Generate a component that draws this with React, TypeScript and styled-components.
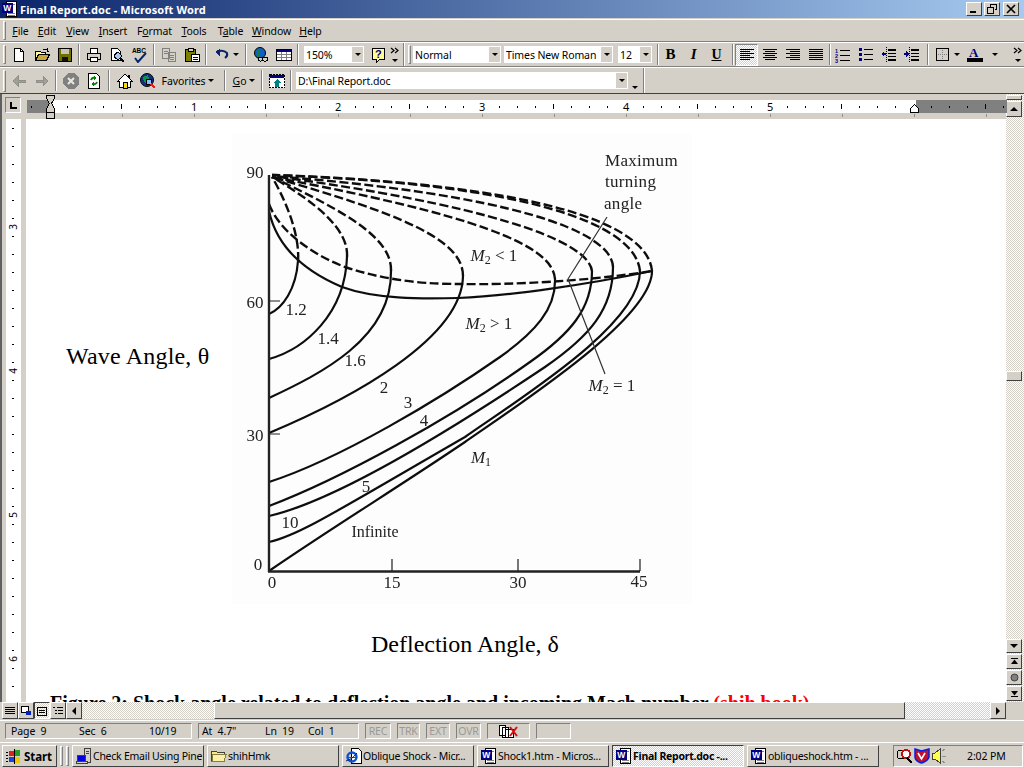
import React from "react";
import styled, { createGlobalStyle } from "styled-components";

const Global = createGlobalStyle`
  html, body { margin: 0; padding: 0; background: #d4d0c8; overflow: hidden; }
  #root { width: 1024px; height: 768px; }
  svg { display: block; flex: none; }
`;

const UI = `"Noto Sans", "DejaVu Sans", sans-serif`;
const DITHER = `repeating-conic-gradient(#fff 0 25%, #d4d0c8 0 50%) 0 0 / 2px 2px`;

const Page = styled.div`
  width: 1024px; height: 768px; display: flex; flex-direction: column;
  background: #d4d0c8; font: 10.5px ${UI}; letter-spacing: -.1px; color: #000; overflow: hidden;
`;
const TitleBar = styled.div`
  height: 18px; flex: none; display: flex; align-items: center; padding: 0 2px;
  gap: 2px; background: linear-gradient(90deg, #0a246a, #a6caf0);
  color: #fff; font: bold 11px ${UI}; letter-spacing: .1px;
`;
const TitleText = styled.span` flex: 1; `;
const WinBtn = styled.div`
  width: 16px; height: 14px; margin-left: ${p => p.$gap || 0}px; display: flex; align-items: center; justify-content: center;
  background: #d4d0c8; border: 1px solid; border-color: #fff #404040 #404040 #fff; box-sizing: border-box;
`;
const TitleSpacer = styled.div` width: 1px; `;
const MenuBar = styled.div`
  height: 23px; flex: none; display: flex; align-items: center; box-sizing: border-box;
  margin-top: 1px; border-top: 1px solid #fff; border-bottom: 1px solid #808080; padding-left: 3px;
`;
const Grip = styled.div`
  width: 1px; height: ${p => p.$h || 17}px; flex: none; background: #d4d0c8;
  border: 1px solid; border-color: #fff #808080 #808080 #fff; margin-right: ${p => p.$mr || 0}px;
`;
const MenuItem = styled.span`
  width: ${p => p.$w}px; flex: none; text-align: center;
`;
const Row = styled.div`
  height: ${p => p.$h}px; flex: none; display: flex; align-items: center; box-sizing: border-box;
  border-top: 1px solid #fff; border-bottom: 1px solid ${p => p.$dark ? "#404040" : "#808080"}; padding-left: 3px;
`;
const Btn = styled.div`
  width: ${p => p.$w || 23}px; height: 22px; flex: none; display: flex; align-items: center; justify-content: center; gap: ${p => p.$gap ?? 3}px;
  box-sizing: border-box;
  ${p => p.$on && `background: ${DITHER}; border: 1px solid; border-color: #808080 #fff #fff #808080;`}
`;
const Sep = styled.div`
  width: 1px; height: 21px; flex: none; background: #808080; border-right: 1px solid #fff;
  margin: 0 ${p => p.$r ?? 2}px 0 ${p => p.$l ?? 2}px;
`;
const Gap = styled.div` width: ${p => p.$w}px; flex: none; `;
const Divider = styled.div`
  width: 1px; align-self: stretch; flex: none; background: #808080; border-right: 1px solid #fff; margin: 0 3px 0 3px;
`;
const Combo = styled.div`
  width: ${p => p.$w}px; height: 17px; flex: none; background: #fff; display: flex; align-items: center;
  justify-content: space-between; margin-right: ${p => p.$mr || 0}px; margin-left: ${p => p.$ml || 0}px;
  padding-left: 2px; box-sizing: border-box; white-space: nowrap;
`;
const ComboArrow = styled.div`
  width: 11px; height: 15px; margin-right: 1px; background: #d4d0c8; display: flex; align-items: center; justify-content: center;
`;
const Tri = styled.i`
  display: block; width: 0; height: 0; border-left: 3px solid transparent; border-right: 3px solid transparent;
  border-top: 3px solid #000;
`;
const Label = styled.span` color: #000; `;
const LetterB = styled.span`font: bold 15px "Liberation Serif", serif;`;
const LetterI = styled.span`font: italic bold 15px "Liberation Serif", serif;`;
const LetterU = styled.span`font: bold 14px "Liberation Serif", serif; text-decoration: underline;`;

const Work = styled.div` height: 608px; flex: none; display: flex; border-left: 2px solid #606060; `;
const WorkLeft = styled.div` width: 1004px; display: flex; flex-direction: column; flex: none; `;
const RulerRow = styled.div` height: 25px; flex: none; display: flex; position: relative; `;
const TabBox = styled.div`
  width: 16px; height: 16px; margin: 3px 4px 0 3px; flex: none; box-sizing: border-box; border: 1px solid;
  border-color: #808080 #fff #fff #808080; display: flex; align-items: center; justify-content: center;
`;
const DocRow = styled.div` flex: 1; display: flex; min-height: 0; `;
const VRuler = styled.div` width: 24px; flex: none; padding-left: 4px; box-sizing: border-box; `;
const Doc = styled.div`
  flex: 1; background: #fff; overflow: hidden; position: relative; font-family: "Liberation Serif", serif; color: #000; letter-spacing: 0;
`;
const ChartRow = styled.div` display: flex; padding: 15px 0 0 40px; height: 470px; box-sizing: content-box; `;
const WaveLabel = styled.div`
  width: 166px; flex: none; font-size: 24px; padding-top: 207px; line-height: 30px; white-space: nowrap; letter-spacing: .2px;
`;
const Deflection = styled.div`
  font-size: 24px; line-height: 30px; margin: 25px 0 0 345px; white-space: nowrap;
`;
const Caption = styled.div`
  font: bold 20px "Liberation Serif", serif; margin: 33px 0 0 24px; white-space: nowrap;
`;
const Red = styled.span` color: #f00; `;

const VScroll = styled.div`
  width: 18px; flex: none; display: flex; flex-direction: column; background: ${DITHER}; padding-top: 1px;
`;
const SBtn = styled.div`
  height: ${p => p.$h || 15}px; width: ${p => p.$w || 16}px; flex: none; background: #d4d0c8; box-sizing: border-box;
  border: 1px solid; border-color: #fff #404040 #404040 #fff; display: flex; align-items: center; justify-content: center;
  margin-bottom: ${p => p.$mb || 0}px;
`;
const STrack = styled.div` height: ${p => p.$h}px; flex: none; `;
const TriUp = styled.i` border-left: 4px solid transparent; border-right: 4px solid transparent; border-bottom: 4px solid #000; `;
const TriDown = styled.i` border-left: 4px solid transparent; border-right: 4px solid transparent; border-top: 4px solid #000; `;
const TriLeft = styled.i` border-top: 4px solid transparent; border-bottom: 4px solid transparent; border-right: 4px solid #000; `;
const TriRight = styled.i` border-top: 4px solid transparent; border-bottom: 4px solid transparent; border-left: 4px solid #000; `;

const HScroll = styled.div` height: 17px; flex: none; display: flex; align-items: stretch; padding-left: 2px; `;
const Dither = styled.div` width: ${p => p.$w}px; flex: none; background: ${DITHER}; `;
const Thumb = styled.div`
  width: ${p => p.$w}px; flex: none; background: #d4d0c8; box-sizing: border-box; border: 1px solid; border-color: #fff #404040 #404040 #fff;
`;
const ViewBtn = styled.div`
  width: 16px; flex: none; box-sizing: border-box; display: flex; align-items: center; justify-content: center;
  border: 1px solid; border-color: ${p => p.$on ? "#404040 #fff #fff #404040" : "#fff #404040 #404040 #fff"};
  background: ${p => p.$on ? DITHER : "#d4d0c8"};
`;

const Status = styled.div`
  height: 21px; flex: none; display: flex; align-items: center; padding-left: 5px; gap: 6px; border-top: 1px solid #fff; box-sizing: border-box; margin-top: 1px;
`;
const Cell = styled.div`
  width: ${p => p.$w}px; height: 16px; flex: none; box-sizing: border-box; border: 1px solid; border-color: #808080 #fff #fff #808080;
  display: flex; align-items: center; color: ${p => p.$off ? "#9a9a94" : "#000"};
  padding-left: ${p => p.$pad ?? 0}px; justify-content: ${p => p.$center ? "center" : "flex-start"}; white-space: pre;
`;
const CellPart = styled.span` width: ${p => p.$w}px; flex: none; `;

const Taskbar = styled.div`
  height: 27px; flex: none; display: flex; align-items: center; padding-left: 2px; box-sizing: border-box;
  border-top: 1px solid #fff; margin-top: 1px;
`;
const StartBtn = styled.div`
  width: 55px; height: 22px; flex: none; display: flex; align-items: center; gap: 2px; padding-left: 3px; box-sizing: border-box;
  border: 1px solid; border-color: #fff #404040 #404040 #fff; font: bold 11.5px ${UI};
`;
const Task = styled.div`
  width: 132px; height: 22px; flex: none; margin-right: 3px; display: flex; align-items: center; gap: 1px; padding-left: 3px; box-sizing: border-box;
  border: 1px solid; border-color: ${p => p.$on ? "#404040 #fff #fff #404040" : "#fff #404040 #404040 #fff"};
  background: ${p => p.$on ? DITHER : "#d4d0c8"}; font-weight: ${p => p.$on ? "bold" : "normal"};
  white-space: nowrap; overflow: hidden; letter-spacing: -.25px;
`;
const Tray = styled.div`
  width: 130px; height: 22px; flex: none; margin-left: 11px; display: flex; align-items: center; gap: 1px; padding-left: 3px; box-sizing: border-box;
  border: 1px solid; border-color: #808080 #fff #fff #808080;
`;
const Clock = styled.span` margin-left: 19px; `;

/* ---------- icons ---------- */
const I: React.FC<{ s?: number; children: React.ReactNode }> = ({ s = 16, children }) => (
  <svg width={s} height={s} viewBox="0 0 16 16" shapeRendering="crispEdges">{children}</svg>
);
const NewIco = () => <I><path d="M3.500 1.500h6l3 3v10h-9z" fill="#fff" stroke="#000" /><path d="M9.500 1.500v3h3" fill="none" stroke="#000" /></I>;
const OpenIco = () => <I><path d="M1.500 13.500v-9h5l1 1h4v2" fill="#ffff99" stroke="#000" /><path d="M1.500 13.500l3-6h11l-3 6z" fill="#c8a83c" stroke="#000" /><path d="M9 3q2-2 4 0M13 1v3h2" fill="none" stroke="#000" /></I>;
const SaveIco = () => <I><rect x="1.500" y="1.500" width="13" height="13" fill="#707000" stroke="#000" /><rect x="4" y="2" width="8" height="5" fill="#c8c4b8" /><rect x="5" y="10" width="6" height="4" fill="#111" /></I>;
const PrintIco = () => <I><path d="M4.500 1.500h7v5h-7z" fill="#fff" stroke="#000" /><path d="M1.500 6.500h13v6h-13z" fill="#d4d0c8" stroke="#000" /><path d="M4.500 10.500h7v4h-7z" fill="#fff" stroke="#000" /><rect x="11" y="8" width="2" height="1" fill="#ff0" /></I>;
const PreviewIco = () => <I><path d="M2.500 1.500h6l3 3v9h-9z" fill="#fff" stroke="#000" /><circle cx="9" cy="9" r="3.200" fill="#a6caf0" stroke="#000" /><path d="M11 11l4 4" stroke="#000" strokeWidth="2" /></I>;
const SpellIco = () => <I><text x="0" y="6" fontSize="6.500" fontWeight="bold" fontFamily="Liberation Sans">ABC</text><path d="M3 11l3 4 8-9" fill="none" stroke="#0a246a" strokeWidth="2" shapeRendering="auto" /></I>;
const CopyIco = () => <I><path d="M1.500 1.500h7v10h-7zM7.500 5.500h7v9h-7z" fill="#d4d0c8" stroke="#808080" /><path d="M3 4h4M3 6h4M9 8h4M9 10h4M9 12h4" stroke="#808080" /></I>;
const PasteIco = () => <I><rect x="1.500" y="2.500" width="10" height="12" fill="#808000" stroke="#000" /><rect x="4" y="1" width="5" height="3" fill="#d4d0c8" stroke="#000" /><rect x="7.500" y="7.500" width="8" height="7" fill="#fff" stroke="#000" /><path d="M9 10h5M9 12h5" stroke="#000080" /></I>;
const UndoIco = () => <I><path d="M3 5q6-3 10 1 1 3-2 5" fill="none" stroke="#0a246a" strokeWidth="2" shapeRendering="auto" /><path d="M1 5l5-3v7z" fill="#0a246a" /></I>;
const WebIco = () => <I><circle cx="7" cy="6" r="5.500" fill="#1060c0" stroke="#000" shapeRendering="auto" /><path d="M4 2l4 2-2 4 2 3-4-1z" fill="#108040" /><rect x="5" y="10" width="5" height="4" rx="2" fill="#d4d0c8" stroke="#000" /><rect x="9" y="10" width="6" height="4" rx="2" fill="#d4d0c8" stroke="#000" /></I>;
const TableIco = () => <I><rect x="0.500" y="2.500" width="15" height="11" fill="#fff" stroke="#000" /><rect x="1" y="3" width="14" height="2" fill="#000080" /><path d="M5.500 5v8M10.500 5v8M1 7.500h14M1 10.500h14" stroke="#808080" /></I>;
const HelpIco = () => <I><path d="M1.500 1.500h12v11h-5l-3 3v-3h-4z" fill="#ffff99" stroke="#000" /><text x="4" y="11" fontSize="11" fontWeight="bold" fill="#000080" fontFamily="Liberation Sans">?</text></I>;
const Chevrons = () => (
  <svg width="10" height="20" viewBox="0 0 10 20"><path d="M1 3l3 2.500-3 2.500M5 3l3 2.500-3 2.500" fill="none" stroke="#000" strokeWidth="1.200" /><path d="M2 14h6l-3 3z" fill="#000" /></svg>
);
const AlignIco: React.FC<{ a: number[]; off?: number[] }> = ({ a, off }) => (
  <I>{a.map((w, i) => <rect key={i} x={off ? off[i] : 1} y={2 + i * 2} width={w} height="1" fill="#000" />)}</I>
);
const NumIco = () => <I><text x="0" y="6" fontSize="5.500" fontWeight="bold" fill="#000080" fontFamily="Liberation Sans">1</text><text x="0" y="11" fontSize="5.500" fontWeight="bold" fill="#000080" fontFamily="Liberation Sans">2</text><text x="0" y="16" fontSize="5.500" fontWeight="bold" fill="#000080" fontFamily="Liberation Sans">3</text><path d="M5 3h10M5 8h10M5 13h10" stroke="#000" /></I>;
const BulletIco = () => <I><path d="M1 1h3v3H1zM1 6h3v3H1zM1 11h3v3H1z" fill="#000080" /><path d="M6 2.500h9M6 7.500h9M6 12.500h9" stroke="#000" /></I>;
const OutdentIco = () => <I><path d="M7 2h8v2H7zM7 6h8v1H7zM7 9h8v1H7zM7 12h8v2H7z" fill="#000" /><path d="M5 0v16" stroke="#000" strokeDasharray="1 1" /><path d="M0 7l3-3v2h2v2H3v2z" fill="#000080" /></I>;
const IndentIco = () => <I><path d="M7 2h8v2H7zM7 6h8v1H7zM7 9h8v1H7zM7 12h8v2H7z" fill="#000" /><path d="M5 0v16" stroke="#000" strokeDasharray="1 1" /><path d="M5 7L2 4v2H0v2h2v2z" fill="#000080" /></I>;
const BorderIco = () => <I><rect x="1.500" y="1.500" width="12" height="12" fill="none" stroke="#000" /><path d="M7.500 3v10M3 7.500h10" stroke="#808080" strokeDasharray="1 1" /></I>;
const ColorIco = () => <I><text x="2" y="10" fontSize="13" fontWeight="bold" fill="#000080" fontFamily="Liberation Serif">A</text><rect x="0" y="11" width="16" height="4" fill="#000" /></I>;
const ArrowIco: React.FC<{ flip?: boolean }> = ({ flip }) => <I><path d={flip ? "M2 7h7V3l5 5-5 5V9H2z" : "M14 7H7V3L2 8l5 5V9h7z"} fill="#a0a09a" stroke="#909088" /></I>;
const StopIco = () => <I><path d="M5 0h6l5 5v6l-5 5H5l-5-5V5z" fill="#808080" /><path d="M5 5l6 6M11 5l-6 6" stroke="#e8e8e0" strokeWidth="2" shapeRendering="auto" /></I>;
const RefreshIco = () => <I><path d="M2.500 0.500h8l3 3v12h-11z" fill="#fff" stroke="#000" /><path d="M5 7q1-3 4-2M11 9q-1 3-4 2" fill="none" stroke="#008000" strokeWidth="2" shapeRendering="auto" /><path d="M8 3l3 2-3 2zM8 13l-3-2 3-2z" fill="#008000" /></I>;
const HomeIco = () => <I><path d="M8 1L0.500 8.500h2v6h11v-6h2z" fill="#fff" stroke="#000" /><rect x="6" y="9" width="4" height="6" fill="#ffd800" stroke="#000" /><rect x="11" y="2" width="2" height="3" fill="#000" /></I>;
const SearchIco = () => <I><circle cx="7" cy="7" r="6.500" fill="#103080" stroke="#000" shapeRendering="auto" /><path d="M3 4l5-2 1 4-3 2 1 3-3-2z" fill="#109050" /><circle cx="9" cy="9" r="3" fill="#80c0ff" stroke="#000" /><path d="M11 11l4 4" stroke="#e02020" strokeWidth="2" /></I>;
const StartPageIco = () => <I><rect x="0.500" y="1.500" width="15" height="13" fill="#fff" stroke="#000" strokeDasharray="2 1" /><rect x="1" y="2" width="14" height="3" fill="#000080" /><path d="M8 6l4 4h-2v4H6v-4H4z" fill="#008080" /></I>;
const WordIco: React.FC = () => <I><rect x="4.500" y="0.500" width="10" height="15" fill="#fff" stroke="#000" /><path d="M6 3h7M6 12h7M6 14h7" stroke="#808080" /><rect x="0.500" y="2.500" width="10" height="9" fill="#000080" stroke="#000080" /><text x="1.300" y="10" fontSize="8.500" fontWeight="bold" fill="#fff" fontFamily="Liberation Sans">W</text></I>;
const PcIco = () => <I><rect x="8.500" y="0.500" width="6" height="14" fill="#d4d0c8" stroke="#404040" /><path d="M10 3h3M10 5h3" stroke="#404040" /><rect x="1.500" y="7.500" width="8" height="6" fill="#0000e0" stroke="#404040" /><rect x="0.500" y="13.500" width="11" height="2" fill="#d4d0c8" stroke="#404040" /></I>;
const FolderIco = () => <I><path d="M0.500 3.500h5l1 1h7v9h-13z" fill="#ffe680" stroke="#404040" /><path d="M2 6.500h13l-2 7H1z" fill="#fff0a8" stroke="#808040" /></I>;
const IeIco = () => <I><path d="M5.500 0.500h7l3 3v12h-10z" fill="#fff" stroke="#000" /><circle cx="6" cy="9" r="4.500" fill="none" stroke="#1050d0" strokeWidth="2.400" shapeRendering="auto" /><path d="M2 9h8" stroke="#1050d0" /><path d="M0 13q6-1 11-8" fill="none" stroke="#0a246a" shapeRendering="auto" /></I>;
const FlagIco = () => <I><path d="M3 3h5v5H3z" fill="#e02020" /><path d="M9 2h5v6H9z" fill="#20a020" /><path d="M3 9h5v5H3z" fill="#2040e0" /><path d="M9 9h5v6H9z" fill="#f0c800" /><path d="M0 4h2M0 7h2M0 10h2M0 13h2M8.500 1v15" stroke="#000" /></I>;
const BookIco = () => (
  <svg width="22" height="15" viewBox="0 0 22 15"><path d="M1.500 1.500h6v10h-6zM4.500 3.500h6v10h-6zM7.500 5.500h8v8h-8z" fill="#fff" stroke="#000" shapeRendering="crispEdges" /><path d="M12 3l7 9M19 3l-7 9" stroke="#d01010" strokeWidth="2" /></svg>
);
const MagIco = () => <I><rect x="0.500" y="2.500" width="9" height="8" rx="2" fill="#d4d0c8" stroke="#000" /><circle cx="9" cy="6" r="4" fill="#fff" stroke="#c01010" strokeWidth="2" /><path d="M10 10l5 5" stroke="#000" strokeWidth="2" /></I>;
const ShieldIco = () => <I><path d="M1 1l6.500 2L15 1v8q-1 4-7.500 6Q1 13 1 9z" fill="#c01030" stroke="#0020e0" strokeWidth="1.500" shapeRendering="auto" /><path d="M4 5l3.500 6L11 5" fill="none" stroke="#fff" strokeWidth="1.600" shapeRendering="auto" /></I>;
const SpeakerIco = () => <I><path d="M1 5h3l5-4v14l-5-4H1z" fill="#ffff50" stroke="#404040" /><path d="M11 3l3-2M11 8h4M11 13l3 2" stroke="#909088" /></I>;
const ViewIco: React.FC<{ k: number }> = ({ k }) => (
  <svg width="12" height="12" viewBox="0 0 12 12" shapeRendering="crispEdges">
    {k === 0 && <path d="M1 2.500h10M1 4.500h10M1 6.500h10M1 8.500h10" stroke="#000" />}
    {k === 1 && <><rect x="1.500" y="1.500" width="7" height="6" fill="#fff" stroke="#000" /><rect x="6" y="6" width="5" height="4" fill="#0020c0" /></>}
    {k === 2 && <><rect x="1.500" y="2.500" width="9" height="8" fill="none" stroke="#000" /><path d="M3 5h6M3 7h6" stroke="#000" /></>}
    {k === 3 && <path d="M1 2.500h2M5 2.500h6M3 5.500h2M6 5.500h5M3 8.500h2M6 8.500h5" stroke="#000" />}
  </svg>
);

/* ---------- ruler drawings ---------- */
const HRuler = () => {
  const ticks: React.ReactNode[] = [];
  for (let x = -18; x < 960; x += 18) {
    const inch = x % 144 === 0;
    const half = x % 72 === 0 && !inch;
    if (inch && x > 0) continue;
    if (half) ticks.push(<rect key={x} x={48 + x} y={105} width="1" height="5" fill="#000" />);
    else if (!inch) ticks.push(<rect key={x} x={48 + x} y={107} width="1" height="2" fill="#000" />);
  }
  const under = [];
  for (let x = 72; x < 950; x += 72) under.push(<rect key={x} x={49 + x} y={115} width="1" height="3" fill="#909088" />);
  return (
    <svg width="982" height="25" viewBox="24 95 982 25" shapeRendering="crispEdges">
      <rect x="26" y="101" width="980" height="13" fill="#fff" />
      <rect x="26" y="101" width="22" height="13" fill="#808080" />
      <rect x="915" y="101" width="91" height="13" fill="#808080" />
      {ticks}
      {under}
      {[1, 2, 3, 4, 5].map(n => (
        <text key={n} x={49 + n * 144} y="112" textAnchor="middle" fontSize="11" fontFamily="Noto Sans">{n}</text>
      ))}
      <path d="M45.500 96.500h8v3l-3 5 3 5v4h-8v-4l3-5-3-5z" fill="#d4d0c8" stroke="#000" />
      <path d="M45.500 113.500h8v6h-8z" fill="#d4d0c8" stroke="#000" />
      <path d="M909.500 113.500v-4l4-4 4 4v4z" fill="#fff" stroke="#000" />
    </svg>
  );
};
const VRulerDraw = () => {
  const t: React.ReactNode[] = [];
  for (let y = 9; y < 583; y += 18) {
    const major = (y - 9 - 45 + 144 * 4) % 72 === 0;
    t.push(<rect key={y} x={major ? 11 : 12} y={y} width={major ? 5 : 2} height="1" fill="#000" />);
  }
  const nums: [number, number][] = [[3, 108], [4, 252], [5, 396], [6, 540]];
  return (
    <svg width="15" height="583" viewBox="6 0 15 583" shapeRendering="crispEdges">
      <rect x="6" y="0" width="15" height="583" fill="#fff" />
      {t}
      {nums.map(([n, y]) => (
        <text key={n} x="13" y={y} transform={`rotate(-90 13 ${y})`} textAnchor="middle" dominantBaseline="central" fontSize="10" fontFamily="Noto Sans">{n}</text>
      ))}
    </svg>
  );
};

/* ---------- chart ---------- */
const SOLID = [
  "M269 315C283 309 296 290 298 262",
  "M269 360C305 350 345 315 347 258",
  "M269 399C320 375 392 340 391 272",
  "M269 434C350 400 462 340 463 277",
  "M269 483C340 460 440 400 500 358C535 333 556 310 555 280",
  "M269 507C340 480 450 420 530 363C570 335 592 310 592 272",
  "M269 517C330 503 430 445 545 368C590 337 613 310 613 268",
  "M269 543C300 536 340 510 465 438C525 396 640 325 640 272",
  "M269 572C330 530 400 487 465 443C530 398 652 318 652 272",
  "M269 212C275 240 295 268 342 288C375 300 420 300 458 299C510 297 590 285 652 272",
];
const DASHED = [
  "M298 262C300 235 285 200 272 178",
  "M347 258C349 230 315 203 272 178",
  "M391 272C392 240 350 215 272 178",
  "M463 277C463 240 400 215 272 178",
  "M555 280C553 245 470 215 272 178",
  "M592 272C588 240 480 205 272 177",
  "M613 268C612 232 510 195 272 177",
  "M640 272C635 225 530 185 272 176",
  "M652 272C648 225 540 185 272 176",
  "M269 205C278 230 310 255 345 268C390 283 430 285 462 285C510 286 590 282 652 272",
];
const Num: React.FC<{ x: number; y: number; a?: string; size?: number; sp?: number; children: React.ReactNode }> = ({ x, y, a = "middle", size = 17, sp = 0, children }) => (
  <text x={x} y={y + 5} textAnchor={a as "middle"} fontSize={size} letterSpacing={sp} fontFamily="Liberation Serif" fill="#222">{children}</text>
);
const M: React.FC<{ x: number; y: number; rest: string }> = ({ x, y, rest }) => (
  <text x={x} y={y + 5} textAnchor="middle" fontSize="17" fontFamily="Liberation Serif" fill="#222">
    <tspan fontStyle="italic">M</tspan><tspan fontSize="12" dy="3">{rest[0]}</tspan><tspan dy="-3">{rest.slice(1)}</tspan>
  </text>
);
const Chart = () => (
  <svg width="460" height="470" viewBox="232 135 460 470">
    <defs><filter id="soft" x="0" y="0" width="1" height="1"><feGaussianBlur stdDeviation="0.65" /></filter></defs>
    <rect x="232" y="135" width="460" height="470" fill="#fdfdfd" />
    <g filter="url(#soft)">
      <rect x="232" y="135" width="460" height="470" fill="none" />
      <g fill="none" stroke="#111" strokeWidth="2.200">
        {SOLID.map((d, i) => <path key={i} d={d} />)}
      </g>
      <g fill="none" stroke="#111" strokeWidth="2.400" strokeDasharray="9 3.500">
        {DASHED.map((d, i) => <path key={i} d={d} />)}
      </g>
      <path d="M269 176V573M268 572.500H640" stroke="#222" strokeWidth="2.400" fill="none" />
      <path d="M270 302h10M268 435h12M392 560v12M518 560v12M640 560v12" stroke="#222" strokeWidth="1.200" fill="none" />
      <path d="M607 218L568 280L605 375" stroke="#333" strokeWidth="1.200" fill="none" />
      <Num x={255} y={174}>90</Num>
      <Num x={255} y={304}>60</Num>
      <Num x={255} y={437}>30</Num>
      <Num x={258} y={566}>0</Num>
      <Num x={272} y={584}>0</Num>
      <Num x={392} y={584}>15</Num>
      <Num x={518} y={584}>30</Num>
      <Num x={639} y={583}>45</Num>
      <Num x={296} y={311}>1.2</Num>
      <Num x={328} y={340}>1.4</Num>
      <Num x={355} y={362}>1.6</Num>
      <Num x={384} y={389}>2</Num>
      <Num x={408} y={404}>3</Num>
      <Num x={424} y={422}>4</Num>
      <Num x={366} y={488}>5</Num>
      <Num x={290} y={524}>10</Num>
      <Num x={375} y={533} size={16}>Infinite</Num>
      <Num x={605} y={162} a="start" sp={0.3}>Maximum</Num>
      <Num x={605} y={183} a="start" sp={0.3}>turning</Num>
      <Num x={604} y={205} a="start" sp={0.3}>angle</Num>
      <M x={494} y={257} rest="2 < 1" />
      <M x={489} y={325} rest="2 > 1" />
      <M x={612} y={387} rest="2 = 1" />
      <M x={481} y={459} rest="1" />
    </g>
  </svg>
);

const Menu: [string, string, string, number][] = [
  ["", "F", "ile", 23], ["", "E", "dit", 30], ["", "V", "iew", 31], ["", "I", "nsert", 40], ["F", "o", "rmat", 43],
  ["", "T", "ools", 36], ["T", "a", "ble", 37], ["", "W", "indow", 45], ["", "H", "elp", 33],
];

export default function App() {
  return (
    <Page>
      <Global />
      <TitleBar>
        <WordIco />
        <TitleText>Final Report.doc - Microsoft Word</TitleText>
        <WinBtn><svg width="10" height="10" viewBox="0 0 10 10"><rect x="1" y="7" width="6" height="2" /></svg></WinBtn>
        <WinBtn $gap={0}><svg width="10" height="10" viewBox="0 0 10 10" shapeRendering="crispEdges"><path d="M3.500 2.500v-2h6v5h-2M0.500 3.500h6v6h-6z" fill="none" stroke="#000" /><path d="M0 3h7v1H0zM3 0h7v1H3z" /></svg></WinBtn>
        <WinBtn $gap={1}><svg width="10" height="10" viewBox="0 0 10 10"><path d="M1 1l8 8M9 1l-8 8" stroke="#000" strokeWidth="1.700" /></svg></WinBtn>
        <TitleSpacer />
      </TitleBar>

      <MenuBar>
        <Grip $mr={3} />
        {Menu.map(([a, b, c, w]) => <MenuItem key={b + c} $w={w}>{a}<u>{b}</u>{c}</MenuItem>)}
      </MenuBar>

      <Row $h={25}>
        <Grip $mr={1} />
        <Btn><NewIco /></Btn><Btn><OpenIco /></Btn><Btn><SaveIco /></Btn>
        <Sep />
        <Btn><PrintIco /></Btn><Btn><PreviewIco /></Btn><Btn><SpellIco /></Btn>
        <Sep />
        <Btn><CopyIco /></Btn><Btn><PasteIco /></Btn>
        <Sep />
        <Btn $w={34}><UndoIco /><Tri /></Btn>
        <Sep />
        <Btn><WebIco /></Btn><Btn><TableIco /></Btn>
        <Sep />
        <Combo $w={60} $ml={3}>150%<ComboArrow><Tri /></ComboArrow></Combo>
        <Gap $w={3} />
        <Btn><HelpIco /></Btn>
        <Chevrons />
        <Divider />
        <Grip $mr={2} />
        <Combo $w={88}>Normal<ComboArrow><Tri /></ComboArrow></Combo>
        <Combo $w={109} $ml={3}>Times New Roman<ComboArrow><Tri /></ComboArrow></Combo>
        <Combo $w={34} $ml={5}>12<ComboArrow><Tri /></ComboArrow></Combo>
        <Sep $l={5} $r={0} />
        <Btn><LetterB>B</LetterB></Btn><Btn><LetterI>I</LetterI></Btn><Btn><LetterU>U</LetterU></Btn>
        <Sep $l={4} $r={1} />
        <Btn $on><AlignIco a={[14, 10, 14, 10, 14, 10]} /></Btn>
        <Btn><AlignIco a={[14, 10, 14, 10, 14, 10]} off={[1, 3, 1, 3, 1, 3]} /></Btn>
        <Btn><AlignIco a={[14, 10, 14, 10, 14, 10]} off={[1, 5, 1, 5, 1, 5]} /></Btn>
        <Btn><AlignIco a={[14, 14, 14, 14, 14, 14]} /></Btn>
        <Sep $l={2} $r={0} />
        <Btn><NumIco /></Btn><Btn><BulletIco /></Btn><Btn><OutdentIco /></Btn><Btn><IndentIco /></Btn>
        <Sep $l={4} $r={1} />
        <Btn $w={35}><BorderIco /><Tri /></Btn>
        <Btn $w={34} $gap={9}><ColorIco /><Tri /></Btn>
        <Gap $w={14} />
        <Chevrons />
      </Row>

      <Row $h={27} $dark>
        <Grip $mr={1} $h={20} />
        <Btn><ArrowIco /></Btn><Btn><ArrowIco flip /></Btn>
        <Sep />
        <Btn><StopIco /></Btn><Btn><RefreshIco /></Btn>
        <Sep $l={3} $r={3} />
        <Btn><HomeIco /></Btn><Btn><SearchIco /></Btn>
        <Btn $w={58}><Label>Favorites</Label><Tri /></Btn>
        <Gap $w={6} />
        <Sep $l={1} />
        <Btn $w={32}><Label><u>G</u>o</Label><Tri /></Btn>
        <Sep $l={1} />
        <Btn><StartPageIco /></Btn>
        <Sep />
        <Combo $w={332} $ml={2}>D:\Final Report.doc<ComboArrow><Tri /></ComboArrow></Combo>
        <Gap $w={2} />
        <svg width="10" height="20" viewBox="0 0 10 20"><path d="M2 15h6l-3 3z" fill="#000" /></svg>
        <Divider />
      </Row>

      <Work>
        <WorkLeft>
          <RulerRow>
            <TabBox><svg width="9" height="9" viewBox="0 0 9 9"><path d="M1 1h2v5h5v2H1z" /></svg></TabBox>
            <HRuler />
          </RulerRow>
          <DocRow>
            <VRuler><VRulerDraw /></VRuler>
            <Doc>
              <ChartRow>
                <WaveLabel>Wave Angle, θ</WaveLabel>
                <Chart />
              </ChartRow>
              <Deflection>Deflection Angle, δ</Deflection>
              <Caption>Figure 2: Shock angle related to deflection angle and incoming Mach number <Red>(shih book)</Red></Caption>
            </Doc>
          </DocRow>
        </WorkLeft>
        <VScroll>
          <SBtn $h={5} $mb={1} />
          <SBtn $h={16}><TriUp /></SBtn>
          <STrack $h={254} />
          <SBtn $h={10} />
          <STrack $h={258} />
          <SBtn $h={14} $mb={1}><TriDown /></SBtn>
          <SBtn $mb={1}><svg width="9" height="9" viewBox="0 0 9 9"><path d="M1 1h7v1H1zM4.500 2.500L8 7H1z" /></svg></SBtn>
          <SBtn $mb={1}><svg width="9" height="9" viewBox="0 0 9 9"><circle cx="4.500" cy="4.500" r="3.500" fill="#808080" stroke="#404040" /></svg></SBtn>
          <SBtn><svg width="9" height="9" viewBox="0 0 9 9"><path d="M1 7h7v1H1zM4.500 6.500L8 2H1z" /></svg></SBtn>
        </VScroll>
      </Work>

      <HScroll>
        <ViewBtn><ViewIco k={0} /></ViewBtn>
        <ViewBtn><ViewIco k={1} /></ViewBtn>
        <ViewBtn $on><ViewIco k={2} /></ViewBtn>
        <ViewBtn><ViewIco k={3} /></ViewBtn>
        <SBtn $h={17}><TriLeft /></SBtn>
        <Dither $w={132} />
        <Thumb $w={691} />
        <Dither $w={85} />
        <SBtn $h={17}><TriRight /></SBtn>
      </HScroll>

      <Status>
        <Cell $w={187} $pad={5}><CellPart $w={68}>Page  9</CellPart><CellPart $w={70}>Sec  6</CellPart>10/19</Cell>
        <Cell $w={161} $pad={3}><CellPart $w={63}>At  4.7"</CellPart><CellPart $w={43}>Ln  19</CellPart>Col  1</Cell>
        <Cell $w={26} $off $center>REC</Cell>
        <Cell $w={23} $off $center>TRK</Cell>
        <Cell $w={24} $off $center>EXT</Cell>
        <Cell $w={25} $off $center>OVR</Cell>
        <Cell $w={43} $center><BookIco /></Cell>
        <Cell $w={35} />
      </Status>

      <Taskbar>
        <StartBtn><FlagIco />Start</StartBtn>
        <Gap $w={3} />
        <Grip $h={18} />
        <Gap $w={3} />
        <Grip $h={18} $mr={3} />
        <Task><PcIco />Check Email Using Pine</Task>
        <Task><FolderIco />shihHmk</Task>
        <Task><IeIco />Oblique Shock - Micr...</Task>
        <Task><WordIco />Shock1.htm - Micros...</Task>
        <Task $on><WordIco />Final Report.doc -...</Task>
        <Task><WordIco />obliqueshock.htm - ...</Task>
        <Tray><MagIco /><ShieldIco /><SpeakerIco /><Clock>2:02 PM</Clock></Tray>
      </Taskbar>
    </Page>
  );
}
